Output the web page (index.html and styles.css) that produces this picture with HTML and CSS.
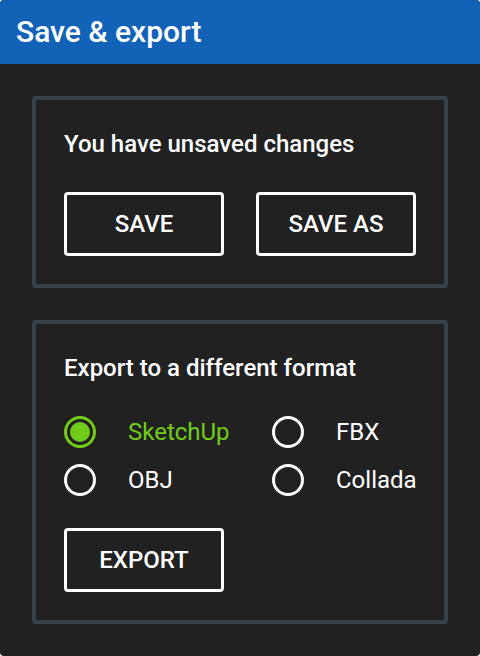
FILE: index.html
```html
<!DOCTYPE html>
<html lang="en">
<head>
<meta charset="utf-8">
<meta name="viewport" content="width=device-width, initial-scale=1">
<title>Save &amp; export</title>
<link rel="stylesheet" href="styles.css">
</head>
<body>
<main class="dialog">
  <header class="dialog-header">
    <h1 class="dialog-title">Save &amp; export</h1>
  </header>
  <div class="dialog-body">
    <section class="panel">
      <h2 class="panel-title">You have unsaved changes</h2>
      <div class="actions">
        <button class="button" type="button">SAVE</button>
        <button class="button" type="button">SAVE AS</button>
      </div>
    </section>
    <form class="panel">
      <h2 class="panel-title" id="format-title">Export to a different format</h2>
      <div class="formats" role="radiogroup" aria-labelledby="format-title">
        <label class="format"><input class="radio" type="radio" name="format" value="sketchup" checked><span>SketchUp</span></label>
        <label class="format"><input class="radio" type="radio" name="format" value="fbx"><span>FBX</span></label>
        <label class="format"><input class="radio" type="radio" name="format" value="obj"><span>OBJ</span></label>
        <label class="format"><input class="radio" type="radio" name="format" value="collada"><span>Collada</span></label>
      </div>
      <div class="actions">
        <button class="button" type="button">EXPORT</button>
      </div>
    </form>
  </div>
</main>
</body>
</html>
```
FILE: styles.css
```css
* {
  box-sizing: border-box;
}

body {
  margin: 0;
  background: #fff;
  color: #fff;
  font-family: Roboto, "Liberation Sans", sans-serif;
  font-size: 24px;
  line-height: 32px;
}

.dialog {
  min-height: 100vh;
  border-radius: 4px;
  background: #212121;
  overflow: hidden;
}

.dialog-header {
  padding: 16px;
  background: #1263b7;
}

.dialog-title {
  margin: 0;
  font-size: 30px;
  font-weight: 500;
  line-height: 32px;
}

.dialog-body {
  display: grid;
  gap: 32px;
  padding: 32px;
}

.panel {
  display: grid;
  gap: 32px;
  padding: 28px;
  border: 4px solid #37424a;
  border-radius: 4px;
}

.panel-title {
  margin: 0;
  font-size: 24px;
  font-weight: 500;
  line-height: 32px;
}

.actions {
  display: grid;
  grid-template-columns: 1fr 1fr;
  gap: 32px;
}

.button {
  padding: 13px 8px;
  border: 3px solid #fff;
  border-radius: 4px;
  background: transparent;
  color: inherit;
  font: inherit;
  font-weight: 500;
  cursor: pointer;
}

.formats {
  display: grid;
  grid-template-columns: 1fr 144px;
  gap: 16px 32px;
}

.format {
  display: flex;
  align-items: center;
  gap: 32px;
}

.format:has(:checked) {
  color: #72cc18;
}

.radio {
  appearance: none;
  display: grid;
  flex: none;
  place-items: center;
  width: 32px;
  height: 32px;
  margin: 0;
  border: 3px solid #fff;
  border-radius: 50%;
}

.radio:checked {
  border-color: #72cc18;
}

.radio:checked::before {
  content: "";
  width: 20px;
  height: 20px;
  border-radius: 50%;
  background: #72cc18;
}
```
